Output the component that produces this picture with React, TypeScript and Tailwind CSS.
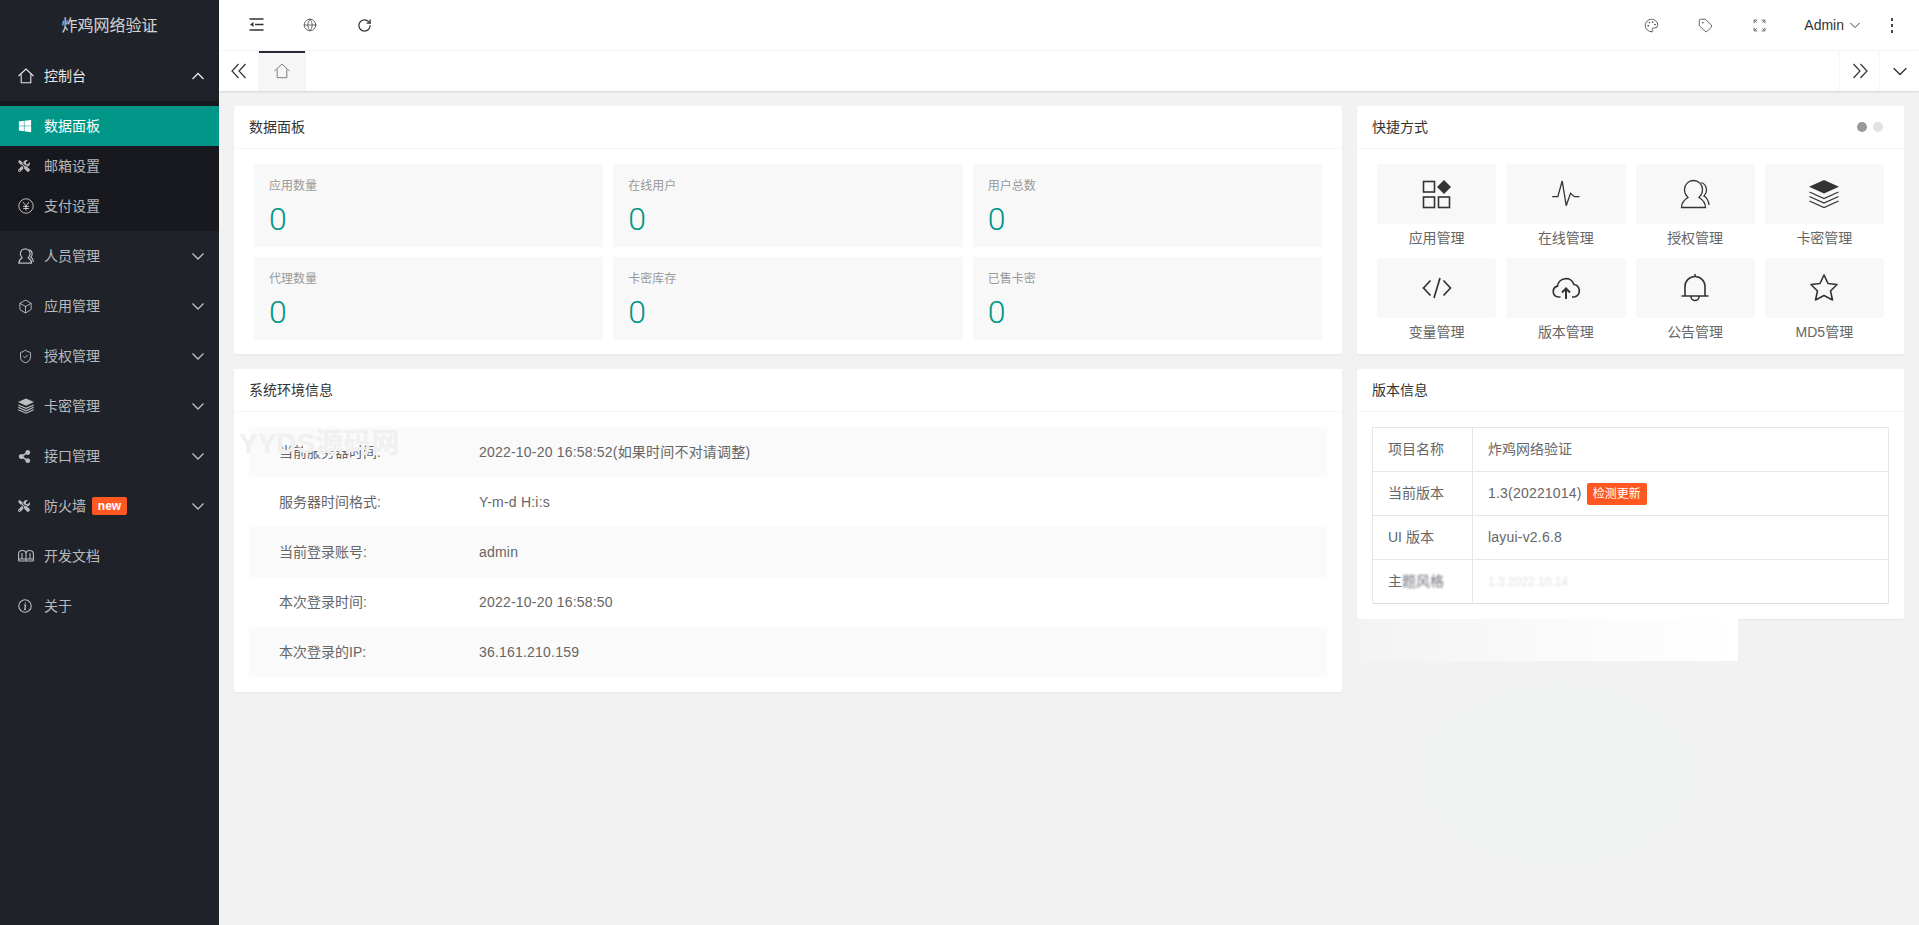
import type { ReactNode } from 'react'
import { Box, Globe, Palette, RotateCw, ShieldCheck, Tag } from 'lucide-react'
import { FaShareAlt, FaTools, FaWindows } from 'react-icons/fa'

const FONT = "font-['Liberation_Sans','Noto_Sans_CJK_SC',sans-serif]"

function Svg({ size = 30, vb = 30, sw = 1.5, className = '', children }: { size?: number; vb?: number; sw?: number; className?: string; children: ReactNode }) {
  return (
    <svg width={size} height={size} viewBox={`0 0 ${vb} ${vb}`} fill="none" stroke="currentColor" strokeWidth={sw} className={className}>
      {children}
    </svg>
  )
}

const Chevron = ({ up = false, size = 14, sw = 1.4 }: { up?: boolean; size?: number; sw?: number }) => (
  <Svg size={size} vb={14} sw={sw}>
    <path d={up ? 'M1.5 10 L7 4.5 L12.5 10' : 'M1.5 4.5 L7 10 L12.5 4.5'} />
  </Svg>
)

const HomeIcon = ({ size = 16, sw = 2 }: { size?: number; sw?: number }) => (
  <Svg size={size} vb={30} sw={sw}>
    <path d="M1 15 L15 2 L29 15 M6 12 V27.5 H24 V12" />
  </Svg>
)

const Apps = ({ size = 30, sw = 1.6 }: { size?: number; sw?: number }) => (
  <Svg size={size} sw={sw}>
    <rect x="1.5" y="2.5" width="11" height="10.5" />
    <rect x="1.5" y="18" width="11" height="10.5" />
    <rect x="16.5" y="18" width="11" height="10.5" />
    <path d="M22 1 L29 8 L22 15 L15 8 Z" fill="currentColor" stroke="none" />
  </Svg>
)

const Pulse = () => (
  <Svg>
    <path d="M1.2 17.7 H6.8 L11.2 2 L15.2 26.7 L19.5 14.3 L23.5 17.7 H28.5" strokeWidth="1.3" />
  </Svg>
)

const Users = ({ size = 30, sw = 1.3 }: { size?: number; sw?: number }) => (
  <Svg size={size} sw={sw}>
    <path d="M1.5 28.5 H25.5 C25.5 23 21.5 20 19 18.5 C21 16.5 22.5 14 22.5 10.5 C22.5 5.5 18.5 1.5 13.5 1.5 S4.5 5.5 4.5 10.5 C4.5 14 6 16.5 8 18.5 C5.5 20 1.5 23 1.5 28.5 Z" />
    <path d="M21 3.5 C24.5 4.5 26.5 7.5 26.5 11 C26.5 14 25 16 24 17 C26.5 18.5 28.5 21.5 29 26" />
  </Svg>
)

const Layers = ({ size = 30, sw = 1.2 }: { size?: number; sw?: number }) => (
  <Svg size={size} sw={sw}>
    <path d="M15 1 L30 7.7 L15 14.5 L0 7.7 Z" fill="currentColor" stroke="none" />
    <path d="M0.5 13 L15 19.5 L29.5 13 M0.5 17.5 L15 24 L29.5 17.5 M0.5 22 L15 28.5 L29.5 22" />
  </Svg>
)

const Code = () => (
  <Svg sw={1.7}>
    <path d="M8.5 7.5 L1.5 15 L8.5 22.5 M21.5 7.5 L28.5 15 L21.5 22.5 M12 25 L18 5" />
  </Svg>
)

const Cloud = () => (
  <Svg sw={1.7}>
    <path d="M9.5 24 H7 A5.5 5.5 0 0 1 6.5 13.2 A8.5 8.5 0 0 1 23 11.5 A6.4 6.4 0 0 1 23.5 24 H21" />
    <path d="M15 26 V15.5 M11 19.5 L15 15.5 L19 19.5" strokeWidth="2" />
  </Svg>
)

const Bell = () => (
  <Svg sw={1.6}>
    <path d="M5 23 V13.5 A10 10 0 0 1 25 13.5 V23 M1.5 23 H28.5 M15 1 V3.5 M11 23.5 A4 4 0 0 0 19 23.5" />
  </Svg>
)

const Star = () => (
  <Svg sw={1.6}>
    <path d="M15 2 L19 10.5 L28 11.5 L21.5 18 L23.5 27 L15 22.5 L6.5 27 L8.5 18 L2 11.5 L11 10.5 Z" strokeLinejoin="round" />
  </Svg>
)

const Yen = () => (
  <Svg size={16} vb={16} sw={1}>
    <circle cx="8" cy="8" r="7.2" />
    <path d="M5 4 L8 8 L11 4 M8 8 V12.5 M5.2 8.5 H10.8 M5.2 10.5 H10.8" />
  </Svg>
)

const Book = () => (
  <Svg size={16} vb={16} sw={1.1}>
    <path d="M0.6 13 V6 C0.6 3 2.5 2.5 4.5 2.5 C6.5 2.5 8 3 8 6 C8 3 9.5 2.5 11.5 2.5 C13.5 2.5 15.4 3 15.4 6 V13 M0.6 11 H15.4 M0.6 13 H15.4 M8 6 V13 M4 5 V11 M12 5 V11" />
  </Svg>
)

const InfoI = () => (
  <Svg size={14} vb={14} sw={1.1}>
    <circle cx="7" cy="7" r="6.2" />
    <path d="M7.4 3.4 V4.5 M6.1 6.2 H7.5 L6.8 10.3 H8" strokeWidth="1.3" />
  </Svg>
)

const Expand = () => (
  <Svg size={13} vb={12} sw={0.9}>
    <path d="M1 4 V1 H4 M1 1 L3.5 3.5 M8 1 H11 V4 M11 1 L8.5 3.5 M1 8 V11 H4 M1 11 L3.5 8.5 M8 11 H11 V8 M11 11 L8.5 8.5" />
  </Svg>
)

const Outdent = () => (
  <svg width="15" height="13" viewBox="0 0 15 13" fill="none" stroke="#333" strokeWidth="1.3">
    <path d="M0.5 1 H14.5 M6 6.5 H14.5 M0.5 12 H14.5" />
    <path d="M4.5 4 L1 6.5 L4.5 9 Z" fill="#333" stroke="none" />
  </svg>
)

const Dbl = ({ left = false }: { left?: boolean }) => (
  <Svg size={16} vb={16} sw={1.2}>
    <path d={left ? 'M7.5 1 L1 8 L7.5 15 M14.5 1 L8 8 L14.5 15' : 'M1.5 1 L8 8 L1.5 15 M8.5 1 L15 8 L8.5 15'} />
  </Svg>
)

const SUB = [
  { label: '数据面板', icon: <FaWindows size={14} />, active: true },
  { label: '邮箱设置', icon: <FaTools size={12} />, active: false },
  { label: '支付设置', icon: <Yen />, active: false },
]

const MENU = [
  { label: '人员管理', icon: <Users size={16} sw={2.2} />, arrow: true },
  { label: '应用管理', icon: <Box size={15} strokeWidth={1.5} />, arrow: true },
  { label: '授权管理', icon: <ShieldCheck size={15} strokeWidth={1.5} />, arrow: true },
  { label: '卡密管理', icon: <Layers size={16} sw={2.2} />, arrow: true },
  { label: '接口管理', icon: <FaShareAlt size={13} />, arrow: true },
  { label: '防火墙', icon: <FaTools size={12} />, arrow: true, badge: 'new' },
  { label: '开发文档', icon: <Book />, arrow: false },
  { label: '关于', icon: <InfoI />, arrow: false },
]

const STATS = ['应用数量', '在线用户', '用户总数', '代理数量', '卡密库存', '已售卡密']

const SHORTCUTS = [
  { label: '应用管理', icon: <Apps /> },
  { label: '在线管理', icon: <Pulse /> },
  { label: '授权管理', icon: <Users /> },
  { label: '卡密管理', icon: <Layers /> },
  { label: '变量管理', icon: <Code /> },
  { label: '版本管理', icon: <Cloud /> },
  { label: '公告管理', icon: <Bell /> },
  { label: 'MD5管理', icon: <Star /> },
]

const ENV = [
  ['当前服务器时间:', '2022-10-20 16:58:52(如果时间不对请调整)'],
  ['服务器时间格式:', 'Y-m-d H:i:s'],
  ['当前登录账号:', 'admin'],
  ['本次登录时间:', '2022-10-20 16:58:50'],
  ['本次登录的IP:', '36.161.210.159'],
]

function Sidebar() {
  return (
    <aside className="flex w-[219px] shrink-0 flex-col bg-[#20222a] text-[14px] text-white/70">
      <div className="flex h-[51px] items-center justify-center text-[16px] text-white/80">炸鸡网络验证</div>
      <div className="flex h-[50px] items-center pl-[18px] pr-[14px] text-white/90">
        <span className="flex w-[26px] justify-start"><HomeIcon /></span>
        <span className="flex-1">控制台</span>
        <Chevron up />
      </div>
      <div className="bg-[#18191f] py-[5px]">
        {SUB.map((s) => (
          <div key={s.label} className={`flex h-10 items-center pl-[18px] ${s.active ? 'bg-[#009688] text-white' : ''}`}>
            <span className="flex w-[26px] justify-start">{s.icon}</span>
            {s.label}
          </div>
        ))}
      </div>
      {MENU.map((m) => (
        <div key={m.label} className="flex h-[50px] items-center pl-[18px] pr-[14px]">
          <span className="flex w-[26px] justify-start">{m.icon}</span>
          <span>{m.label}</span>
          {m.badge && (
            <span className="ml-[6px] flex h-[18px] w-[35px] items-center justify-center rounded-[2px] bg-[#ff5722] text-[12px] font-bold text-white">{m.badge}</span>
          )}
          {m.arrow && <span className="ml-auto flex"><Chevron /></span>}
        </div>
      ))}
    </aside>
  )
}

function TopBar() {
  return (
    <header className="flex h-[51px] shrink-0 items-center border-b border-[#f6f6f6] bg-white text-[#333]">
      <div className="flex pl-[10px]">
        <span className="flex w-[54px] justify-center"><Outdent /></span>
        <span className="flex w-[54px] justify-center"><Globe size={14} strokeWidth={1.2} /></span>
        <span className="flex w-[54px] justify-center"><RotateCw size={15} strokeWidth={2} /></span>
      </div>
      <div className="ml-auto flex items-center">
        <span className="flex w-[54px] justify-center"><Palette size={15} strokeWidth={1.2} /></span>
        <span className="flex w-[54px] justify-center"><Tag size={15} strokeWidth={1.2} /></span>
        <span className="flex w-[54px] justify-center text-[#666]"><Expand /></span>
        <span className="ml-[18px] text-[14px]">Admin</span>
        <span className="ml-[5px] flex"><Chevron size={12} sw={1.1} /></span>
        <span className="ml-[4px] flex w-[54px] flex-col items-center gap-[3px]">
          <i className="h-[3px] w-[2px] bg-[#444]" />
          <i className="h-[3px] w-[2px] bg-[#444]" />
          <i className="h-[3px] w-[2px] bg-[#444]" />
        </span>
      </div>
    </header>
  )
}

function TabBar() {
  return (
    <div className="relative z-10 flex h-10 shrink-0 bg-white text-[#333] shadow-[0_1px_2px_rgba(0,0,0,0.12)]">
      <div className="flex w-[39px] items-center justify-center"><Dbl left /></div>
      <div className="relative flex w-[48px] items-center justify-center bg-[#f6f6f6] text-[#555]">
        <i className="absolute inset-x-[1px] top-0 h-[2px] bg-[#292b34]" />
        <HomeIcon size={16} sw={1.4} />
      </div>
      <div className="ml-auto flex w-10 items-center justify-center border-l border-[#f6f6f6]"><Dbl /></div>
      <div className="flex w-10 items-center justify-center border-l border-[#f6f6f6]"><Chevron size={16} sw={1.2} /></div>
    </div>
  )
}

function Card({ title, extra, className = '', children }: { title: string; extra?: ReactNode; className?: string; children: ReactNode }) {
  return (
    <section className={`relative rounded-[2px] bg-white shadow-[0_1px_2px_rgba(0,0,0,0.05)] ${className}`}>
      <div className="flex h-[43px] items-center justify-between border-b border-[#f6f6f6] px-[15px] text-[14px] text-[#333]">
        {title}
        {extra}
      </div>
      {children}
    </section>
  )
}

function VersionRow({ label, children }: { label: ReactNode; children: ReactNode }) {
  return (
    <div className="flex h-[44px] border-b border-[#e6e6e6] last:border-b-[#dedede]">
      <div className="flex w-[100px] shrink-0 items-center border-r border-[#e6e6e6] pl-[15px]">{label}</div>
      <div className="flex items-center pl-[15px]">{children}</div>
    </div>
  )
}

export default function App() {
  return (
    <div className={`flex h-screen overflow-hidden bg-[#f2f2f2] text-[14px] ${FONT}`}>
      <Sidebar />
      <div className="relative flex min-w-0 flex-1 flex-col">
        <TopBar />
        <TabBar />
        {/* 右下角残留的淡水印 */}
        <i className="absolute left-[1196px] top-[680px] h-[187px] w-[285px] rounded-[50%] bg-[#f0f1f1]" />
        <main className="relative grid grid-cols-[1108px_547px] items-start gap-[15px] p-[15px]">
          <Card title="数据面板" className="h-[248px]">
            <div className="grid grid-cols-3 gap-[10px] px-5 pt-[15px]">
              {STATS.map((s) => (
                <div key={s} className="h-[83px] rounded-[2px] bg-[#f8f8f8] px-[15px] pt-[15px]">
                  <p className="text-[12px] leading-[14px] text-[#999]">{s}</p>
                  <p className="mt-[11px] font-['Roboto',sans-serif] text-[32px] font-light leading-[30px] text-[#009688]">0</p>
                </div>
              ))}
            </div>
          </Card>

          <Card
            title="快捷方式"
            className="h-[248px]"
            extra={
              <span className="flex gap-[6px] pr-[6px]">
                <i className="h-[10px] w-[10px] rounded-full bg-[#999]" />
                <i className="h-[10px] w-[10px] rounded-full bg-[#e2e2e2]" />
              </span>
            }
          >
            <div className="grid grid-cols-4 gap-x-[10px] px-5 pt-[15px]">
              {SHORTCUTS.map((s) => (
                <div key={s.label} className="text-center">
                  <div className="flex h-[60px] items-center justify-center rounded-[2px] bg-[#f8f8f8] text-[#333]">{s.icon}</div>
                  <div className="flex h-[34px] items-center justify-center pb-[5px] text-[#666]">{s.label}</div>
                </div>
              ))}
            </div>
          </Card>

          <Card title="系统环境信息" className="h-[323px]">
            <div className="px-[15px] pt-[15px]">
              {ENV.map(([k, v]) => (
                <div key={k} className="flex h-[50px] items-center text-[#666] odd:bg-[#fafafa]">
                  <span className="w-[230px] shrink-0 pl-[30px]">{k}</span>
                  <span className="tracking-[0.2px]">{v}</span>
                </div>
              ))}
            </div>
            {/* 水印盖在第一行上面 */}
            <i className="absolute left-[69px] top-[71px] h-[11px] w-[52px] bg-[#fafafa]" />
            <span className="absolute left-[5px] top-[59px] text-[28px] font-bold leading-[32px] text-[#f0f0f0]">YYDS源码网</span>
          </Card>

          <Card title="版本信息" className="h-[250px]">
            <div className="mx-[15px] mt-[15px] border border-b-0 border-[#e6e6e6] text-[#666]">
              <VersionRow label="项目名称">炸鸡网络验证</VersionRow>
              <VersionRow label="当前版本">
                <span className="tracking-[0.2px]">1.3(20221014)</span>
                <span className="ml-[5px] flex h-[22px] w-[60px] items-center justify-center rounded-[2px] bg-[#ff5722] text-[12px] text-white">检测更新</span>
              </VersionRow>
              <VersionRow label="UI 版本"><span className="tracking-[0.2px]">layui-v2.6.8</span></VersionRow>
              <VersionRow
                label={
                  <>
                    主<span className="text-[#445] opacity-80 blur-[1px]">题风格</span>
                  </>
                }
              >
                <span className="text-[12px] opacity-20 blur-[1px]">1.3 2022.10.14</span>
              </VersionRow>
            </div>
            <div className="absolute left-0 top-[250px] h-[42px] w-[381px] bg-gradient-to-r from-[#f3f3f3] via-[#fafafa] to-white">
              <i className="absolute bottom-0 left-[115px] top-0 w-px bg-[#f6f6f6]" />
            </div>
          </Card>
        </main>
      </div>
    </div>
  )
}
